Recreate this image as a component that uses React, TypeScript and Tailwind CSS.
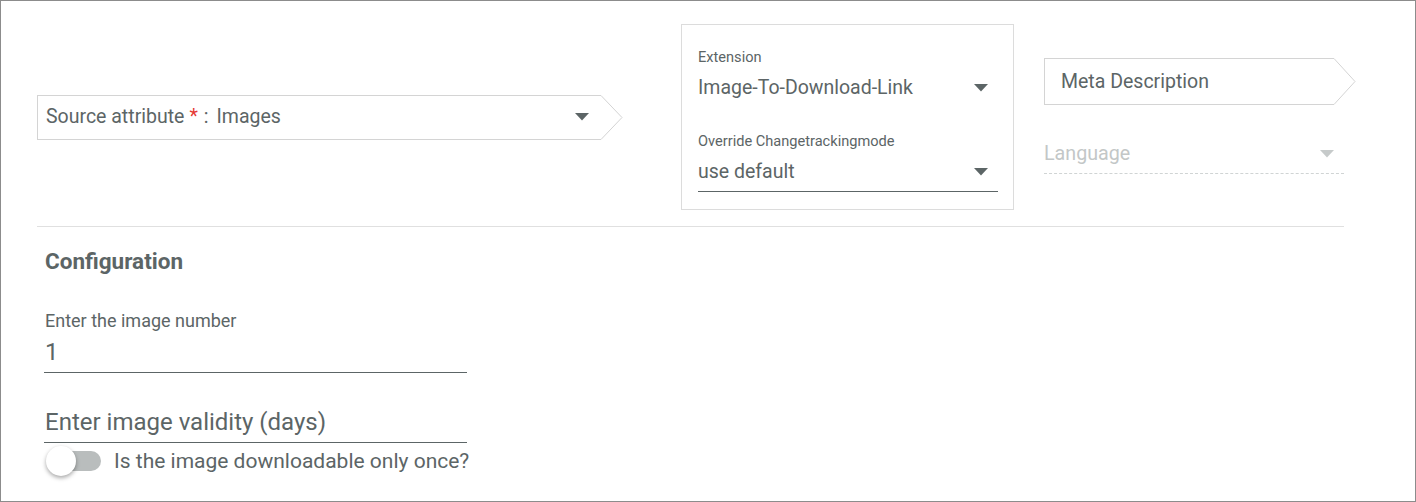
import React from "react";

const Tri = ({ color = "#5c6566" }: { color?: string }) => (
  <svg width="14" height="8" viewBox="0 0 14 8" className="shrink-0">
    <path d="M0 0 L14 0 L7 7.5 Z" fill={color} />
  </svg>
);

const Chevron = ({ h }: { h: number }) => (
  <svg width="23" height={h} viewBox={`0 0 23 ${h}`} className="shrink-0 block">
    <polyline
      points={`0,0.5 1,0.5 22,${h / 2} 1,${h - 0.5} 0,${h - 0.5}`}
      fill="white"
      stroke="#d4d4d4"
      strokeWidth="1"
    />
  </svg>
);

export default function App() {
  return (
    <div
      className="w-[1416px] h-[502px] border border-[#8c8c8c] bg-white text-[#5c6566] overflow-hidden"
      style={{ fontFamily: "Roboto, 'Liberation Sans', sans-serif" }}
    >
      <div className="pl-[36px] pt-[23px] w-[1343px]">
        {/* top row */}
        <div className="flex items-center">
          {/* source attribute */}
          <div className="flex items-stretch h-[45px]">
            <div className="w-[563px] h-[45px] border-t border-b border-l border-[#d4d4d4] flex items-center pl-[8px] pr-[11px]">
              <div className="flex-1 flex items-center text-[19.5px] leading-none whitespace-nowrap">
                <span>Source attribute</span>
                <span className="ml-[5px] text-[#e53935]">*</span>
                <span className="ml-[6px]">:</span>
                <span className="ml-[8px]">Images</span>
              </div>
              <Tri />
            </div>
            <Chevron h={45} />
          </div>

          {/* extension box */}
          <div className="ml-[58px] w-[333px] h-[186px] border border-[#dcdcdc] pl-[16px] pr-[15px] pt-[22px] shrink-0">
            <div className="text-[14.6px] leading-[20px]">Extension</div>
            <div className="mt-[7px] flex items-center h-[28px] pr-[10px]">
              <div className="flex-1 text-[19.5px] leading-[28px] whitespace-nowrap">Image-To-Download-Link</div>
              <Tri />
            </div>
            <div className="mt-[29px] text-[14.6px] leading-[20px] whitespace-nowrap">Override Changetrackingmode</div>
            <div className="mt-[7px] flex items-center h-[34px] pb-[6px] pr-[10px] border-b border-[#5c6566]">
              <div className="flex-1 text-[19.5px] leading-[28px]">use default</div>
              <Tri />
            </div>
          </div>

          {/* right column */}
          <div className="ml-[30px] w-[300px] shrink-0 flex flex-col -mt-[2px]">
            <div className="flex items-stretch h-[47px]">
              <div className="w-[289px] shrink-0 h-[47px] border-t border-b border-l border-[#d4d4d4] flex items-center pl-[16px]">
                <span className="text-[19.5px] leading-none whitespace-nowrap">Meta Description</span>
              </div>
              <Chevron h={47} />
            </div>
            <div className="mt-[35px] flex items-center h-[34px] pb-[6px] pr-[10px] border-b border-dashed border-[#d0d4d4]">
              <div className="flex-1 text-[19.7px] leading-[28px] text-[#c3c7c7]">Language</div>
              <Tri color="#c6caca" />
            </div>
          </div>
        </div>

        {/* divider */}
        <div className="mt-[16px] border-t border-[#e0e0e0]" />

        {/* configuration */}
        <div className="pl-[7px]">
          <div className="mt-[20px] pl-[1px] text-[22.5px] leading-[28px] font-bold whitespace-nowrap">Configuration</div>

          <div className="mt-[35px] w-[423px]">
            <div className="pl-[1px] text-[18px] leading-[22px] whitespace-nowrap">Enter the image number</div>
            <div className="mt-[6px] pl-[1px] h-[35px] pb-[7px] border-b border-[#5c6566] text-[24px] leading-[28px]">1</div>
          </div>

          <div className="mt-[35px] w-[423px]">
            <div className="pl-[1px] h-[35px] pb-[7px] border-b border-[#5c6566] text-[24px] leading-[28px] whitespace-nowrap">
              Enter image validity (days)
            </div>
          </div>

          <div className="flex items-center h-[36px]">
            <div className="relative w-[57px] h-[30px] flex items-center">
              <div className="absolute left-[7px] w-[50px] h-[20px] rounded-full bg-[#b9bdbd]" />
              <div className="absolute left-[2px] w-[30px] h-[30px] rounded-full bg-white shadow-[0_2px_4px_rgba(0,0,0,0.35)]" />
            </div>
            <span className="ml-[13px] text-[21px] leading-none whitespace-nowrap">Is the image downloadable only once?</span>
          </div>
        </div>
      </div>
    </div>
  );
}
